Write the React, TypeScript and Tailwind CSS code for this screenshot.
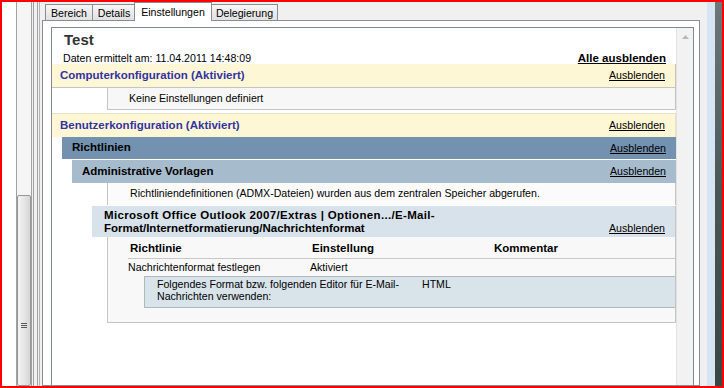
import React from "react";

function Ausblenden() {
  return <span className="underline text-black text-[10.6px] leading-[13px]">Ausblenden</span>;
}

export default function App() {
  return (
    <div className="w-[724px] h-[388px] border-2 border-[#ff0000] flex overflow-hidden bg-white font-['Liberation_Sans',Arial,sans-serif] text-[10.6px] text-black">
      {/* left white strip */}
      <div className="w-[14px] shrink-0 bg-white" />
      {/* left pane scrollbar */}
      <div className="w-[16px] shrink-0 border-l border-r border-[#a0a0a0] bg-[#f4f4f4] flex flex-col">
        <div className="h-[193px] shrink-0" />
        <div className="flex-1 rounded-[2px] border border-[#979797] bg-linear-to-r from-[#f4f4f4] to-[#d6d6d6] flex flex-col items-center pt-[127px] gap-[1px]">
          <div className="w-[6px] h-px bg-[#5a5a5a]" />
          <div className="w-[6px] h-px bg-[#5a5a5a]" />
          <div className="w-[6px] h-px bg-[#5a5a5a]" />
        </div>
      </div>
      {/* splitter lines */}
      <div className="w-[10px] shrink-0 flex bg-[#f0f0f0]">
        <div className="w-px" />
        <div className="w-px bg-[#a0a0a0]" />
        <div className="w-[3px]" />
        <div className="w-px bg-[#a0a0a0]" />
        <div className="w-px" />
        <div className="w-px bg-[#b4b4b4]" />
        <div className="w-[2px]" />
      </div>
      {/* tab control */}
      <div className="w-[665px] shrink-0 flex flex-col bg-[#f0f0f0]">
        <div className="h-[18px] shrink-0 flex items-end pl-[3px] relative z-10">
          <div className="w-[48px] h-[16px] border border-b-0 border-[#898c95] bg-linear-to-b from-[#f5f5f5] to-[#e1e1e1] flex items-center justify-center leading-[14px]">
            Bereich
          </div>
          <div className="-ml-px w-[44px] h-[16px] border border-b-0 border-[#898c95] bg-linear-to-b from-[#f5f5f5] to-[#e1e1e1] flex items-center justify-center leading-[14px]">
            Details
          </div>
          <div className="-ml-[2px] w-[78px] h-[19px] -mb-px border border-b-0 border-[#898c95] bg-white relative z-20 flex items-start justify-center pt-[2px] leading-[14px]">
            Einstellungen
          </div>
          <div className="w-[66px] h-[16px] border border-b-0 border-l-0 border-[#898c95] bg-linear-to-b from-[#f5f5f5] to-[#e1e1e1] flex items-center justify-center leading-[14px]">
            Delegierung
          </div>
        </div>
        <div className="w-[658px] flex-1 min-h-0 border border-[#898c95] bg-white pt-[6px] pl-[8px] pr-[5px] flex flex-col">
          <div className="flex-1 min-h-0 border border-b-0 border-[#828790] bg-white flex">
            {/* report content */}
            <div className="w-[624px] shrink-0 flex flex-col">
              <div className="h-[24px] leading-[24px] pl-[12px] text-[15px] font-bold text-[#333333]">Test</div>
              <div className="h-[12px] flex items-center justify-between pl-[11px] pr-[10px]">
                <span className="leading-[12px]">Daten ermittelt am: 11.04.2011 14:48:09</span>
                <span className="font-bold text-[11.5px] underline leading-[12px]">Alle ausblenden</span>
              </div>
              {/* Computerkonfiguration */}
              <div className="h-[24px] bg-[#fef7d6] border-b border-r border-[#c4c4c4] flex items-center justify-between pl-[8px] pr-[10px]">
                <span className="font-bold text-[11.5px] text-[#3333a3]">Computerkonfiguration (Aktiviert)</span>
                <Ausblenden />
              </div>
              <div className="ml-[55px] h-[22px] bg-[#f7f7f7] border-l border-r border-b border-[#c4c4c4] flex items-center pl-[21px] pt-px">
                Keine Einstellungen definiert
              </div>
              {/* Benutzerkonfiguration */}
              <div className="mt-[3px] h-[24px] bg-[#fef7d6] border-t border-r border-[#e6e0c4] flex items-center justify-between pl-[8px] pr-[10px]">
                <span className="font-bold text-[11.5px] text-[#3333a3]">Benutzerkonfiguration (Aktiviert)</span>
                <Ausblenden />
              </div>
              <div className="ml-[10px] h-[22px] bg-[#7292b0] flex items-center justify-between pl-[10px] pr-[10px]">
                <span className="font-bold text-[11.5px]">Richtlinien</span>
                <Ausblenden />
              </div>
              <div className="mt-px ml-[20px] h-[23px] bg-[#a6bccd] flex items-center justify-between pl-[10px] pr-[10px]">
                <span className="font-bold text-[11.5px]">Administrative Vorlagen</span>
                <Ausblenden />
              </div>
              <div className="ml-[55px] h-[22px] bg-[#fbfbfb] border-l border-r border-[#c4c4c4] flex items-center pl-[22px]">
                Richtliniendefinitionen (ADMX-Dateien) wurden aus dem zentralen Speicher abgerufen.
              </div>
              <div className="mt-px ml-[40px] h-[31px] bg-[#d8e2ea] border-r border-[#c4c4c4] flex items-end justify-between pl-[12px] pr-[10px] pb-[2px]">
                <span className="font-bold text-[11.5px] leading-[13px]">
                  <span className="tracking-[0.33px]">Microsoft Office Outlook 2007/Extras | Optionen.../E-Mail-</span>
                  <br />
                  Format/Internetformatierung/Nachrichtenformat
                </span>
                <Ausblenden />
              </div>
              {/* settings box */}
              <div className="ml-[55px] bg-[#f8f8f8] border-l border-r border-b border-[#c4c4c4] pl-[20px] pb-[14px]">
                <div className="h-[22px] flex items-end pb-[3px] border-b border-[#c8c8c8] font-bold text-[11.5px] leading-[13px]">
                  <div className="w-[182px] pl-[2px]">Richtlinie</div>
                  <div className="w-[182px] pl-[2px]">Einstellung</div>
                  <div className="pl-[2px]">Kommentar</div>
                </div>
                <div className="h-[17px] flex items-center">
                  <div className="w-[182px]">Nachrichtenformat festlegen</div>
                  <div>Aktiviert</div>
                </div>
                <div className="ml-[16px] h-[32px] bg-[#d9e3ea] border-t border-b border-l border-[#b0b8be] flex pt-[1px]">
                  <div className="w-[277px] pl-[12px] leading-[12px]">
                    Folgendes Format bzw. folgenden Editor für E-Mail-
                    <br />
                    Nachrichten verwenden:
                  </div>
                  <div className="leading-[12px]">HTML</div>
                </div>
              </div>
            </div>
            {/* report scrollbar */}
            <div className="flex-1 bg-[#f2f2f2] border-l border-[#e2e2e2] flex flex-col items-center">
              <div className="h-[17px] flex items-center justify-center">
                <svg width="7" height="4" viewBox="0 0 7 4">
                  <path d="M0 4 L3.5 0 L7 4 Z" fill="#b8b8b8" />
                </svg>
              </div>
            </div>
          </div>
        </div>
      </div>
      {/* right edge */}
      <div className="w-[8px] shrink-0 bg-[#d7e5f3]" />
      <div className="w-[7px] shrink-0 bg-linear-to-b from-[#6d777b] via-[#4a5656] to-[#3a4545]" />
    </div>
  );
}
